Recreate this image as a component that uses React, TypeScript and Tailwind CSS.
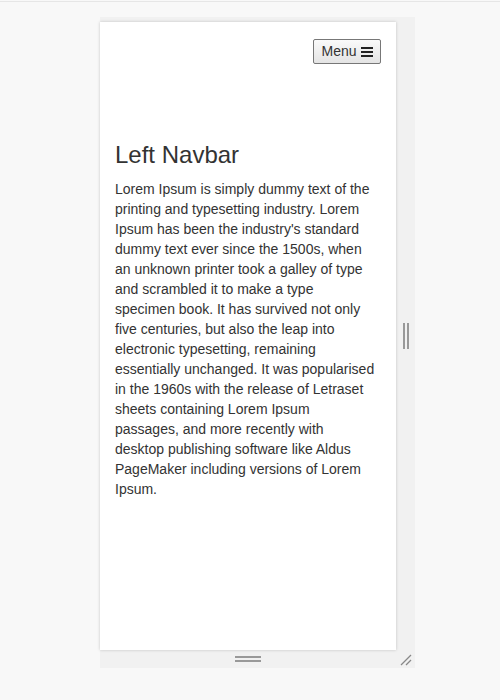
import React from 'react';

// line breaks follow the reference wrapping
const lines = [
  'Lorem Ipsum is simply dummy text of the',
  'printing and typesetting industry. Lorem',
  "Ipsum has been the industry's standard",
  'dummy text ever since the 1500s, when',
  'an unknown printer took a galley of type',
  'and scrambled it to make a type',
  'specimen book. It has survived not only',
  'five centuries, but also the leap into',
  'electronic typesetting, remaining',
  'essentially unchanged. It was popularised',
  'in the 1960s with the release of Letraset',
  'sheets containing Lorem Ipsum',
  'passages, and more recently with',
  'desktop publishing software like Aldus',
  'PageMaker including versions of Lorem',
  'Ipsum.',
];

export default function App() {
  return (
    <div className="w-[500px] h-[700px] bg-[#f8f8f8] font-['Liberation_Sans',Arial,sans-serif] text-[#333]">
      <div className="h-[2px] border-b border-[#e6e6e6]" />
      <div className="pt-[15px] pl-[100px]">
        <div className="w-[315px] bg-[#f1f1f1]">
          <div className="flex pt-[5px]">
            {/* preview frame */}
            <div className="w-[296px] h-[628px] bg-white shadow-[0_0_3px_rgba(0,0,0,0.2)] px-[15px]">
              <div className="flex justify-end pt-[17px]">
                <button className="h-[25px] w-[68px] flex items-center justify-center gap-[4px] border border-[#777] rounded-[2px] bg-gradient-to-b from-[#fafafa] to-[#e4e4e4] text-[14px] text-[#333]">
                  Menu
                  <svg width="12" height="11" viewBox="0 0 12 11">
                    <rect x="0" y="1" width="12" height="2" fill="#222" />
                    <rect x="0" y="5" width="12" height="2" fill="#222" />
                    <rect x="0" y="9" width="12" height="2" fill="#222" />
                  </svg>
                </button>
              </div>
              <h2 className="mt-[78px] text-[24px] leading-[26px]">Left Navbar</h2>
              <p className="mt-[11px] text-[14px] leading-[20px] whitespace-nowrap">
                {lines.map((l, i) => (
                  <React.Fragment key={i}>
                    {l}
                    {i < lines.length - 1 && <br />}
                  </React.Fragment>
                ))}
              </p>
            </div>
            {/* right resize handle */}
            <div className="flex-1 flex items-center justify-center">
              <div className="flex gap-[2px] h-[26px]">
                <div className="w-[2px] bg-[#999]" />
                <div className="w-[2px] bg-[#999]" />
              </div>
            </div>
          </div>
          {/* bottom resize handle */}
          <div className="relative h-[18px] flex justify-center items-center pr-[19px]">
            <div className="flex flex-col gap-[2px] w-[26px]">
              <div className="h-[2px] bg-[#999]" />
              <div className="h-[2px] bg-[#999]" />
            </div>
            <svg className="absolute right-[3px] bottom-[2px]" width="12" height="12" viewBox="0 0 12 12">
              <line x1="1" y1="11" x2="11" y2="1" stroke="#888" strokeWidth="1.3" />
              <line x1="6" y1="11" x2="11" y2="6" stroke="#888" strokeWidth="1.3" />
            </svg>
          </div>
        </div>
      </div>
    </div>
  );
}
